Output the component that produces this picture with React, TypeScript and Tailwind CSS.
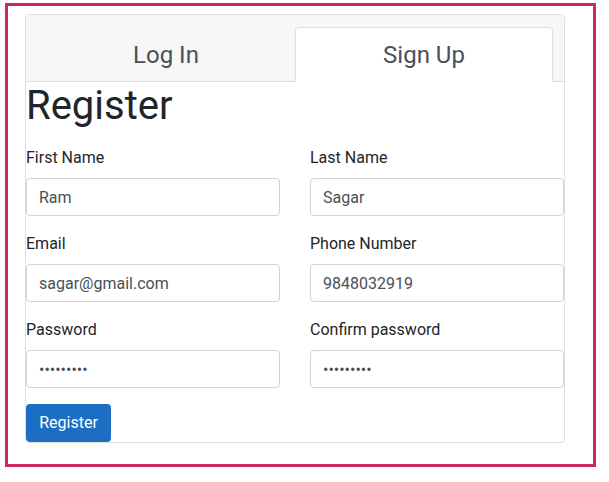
import React from "react";

const fields: { label: string; value: string; type?: string }[] = [
  { label: "First Name", value: "Ram" },
  { label: "Last Name", value: "Sagar" },
  { label: "Email", value: "sagar@gmail.com" },
  { label: "Phone Number", value: "9848032919" },
  { label: "Password", value: "123456789", type: "password" },
  { label: "Confirm password", value: "123456789", type: "password" },
];

export default function App() {
  return (
    <div
      className="w-[609px] h-[482px] bg-white pt-[3px] pl-[5px]"
      style={{ fontFamily: "Roboto, 'Liberation Sans', sans-serif" }}
    >
      <div className="w-[591px] h-[464px] border-[3px] border-[#cc2a5a] pt-[8px] pl-[17px]">
        <div className="w-[540px] border border-[#dfdfdf] rounded-[4px] overflow-hidden">
          <div className="bg-[#f7f7f7] border-b border-[#dfdfdf] px-[11px] pt-3 flex">
            <div className="w-[258px] shrink-0 h-[55px] -mb-px flex items-center justify-center text-[24px] text-[#495057]">
              Log In
            </div>
            <div className="w-[258px] shrink-0 h-[55px] -mb-px flex items-center justify-center text-[24px] text-[#495057] bg-white border border-b-0 border-[#dfdfdf] rounded-t-[4px]">
              Sign Up
            </div>
          </div>
          <div>
            <h1 className="text-[40px] leading-[48px] font-normal text-[#212529] mb-4">
              Register
            </h1>
            <div className="grid grid-cols-2 gap-x-[30px]">
              {fields.map((f) => (
                <div key={f.label} className="mb-4">
                  <label className="block text-base leading-6 mb-2 text-[#212529]">
                    {f.label}
                  </label>
                  <input
                    readOnly
                    type={f.type ?? "text"}
                    value={f.value}
                    className="block w-full h-[38px] px-3 border border-[#ced4da] rounded-[4px] text-base text-[#495057] bg-white outline-none"
                    style={{ fontFamily: "Roboto, 'Liberation Sans', sans-serif" }}
                  />
                </div>
              ))}
            </div>
            <button className="w-[85px] h-[38px] bg-[#1b6ec2] text-white text-base rounded-[4px] leading-6">
              Register
            </button>
          </div>
        </div>
      </div>
    </div>
  );
}
